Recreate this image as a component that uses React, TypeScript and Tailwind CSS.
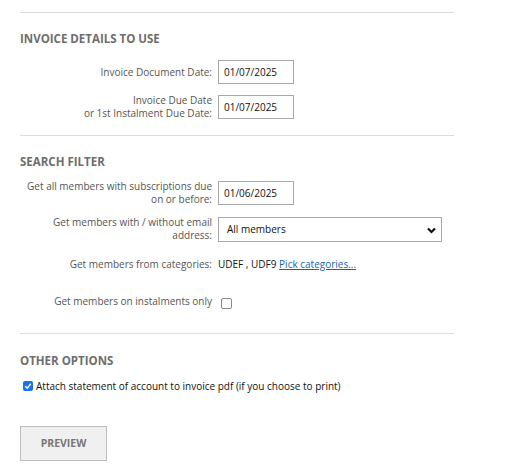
import { ReactNode } from 'react';

const Row = ({ label, children, className = '' }: { label: ReactNode; children: ReactNode; className?: string }) => (
  <div className={`flex items-center ${className}`}>
    <div className="w-[192px] shrink-0 text-right text-[10px] leading-[13px] text-[#555]">{label}</div>
    <div className="ml-[6px] flex items-center">{children}</div>
  </div>
);

const DateBox = ({ value }: { value: string }) => (
  <input
    readOnly
    defaultValue={value}
    className="h-[24px] w-[76px] border border-[#a9a9a9] bg-white pl-[5px] text-[10px] text-[#111] outline-none"
  />
);

const Heading = ({ children, className = 'mt-[18px]' }: { children: ReactNode; className?: string }) => (
  <div className={`text-[11.5px] font-bold leading-[16px] text-[#6e6e6e] ${className}`}>{children}</div>
);

const Rule = ({ className = '' }: { className?: string }) => (
  <div className={`h-px w-[434px] bg-[#dcdcdc] ${className}`} />
);

export default function App() {
  return (
    <div className="min-h-[476px] w-[508px] bg-white pl-[20px] pt-[12px]" style={{ fontFamily: '"Open Sans", sans-serif' }}>
      <Rule />

      <Heading>INVOICE DETAILS TO USE</Heading>
      <Row label="Invoice Document Date:" className="mt-[13px]">
        <DateBox value="01/07/2025" />
      </Row>
      <Row
        label={
          <>
            Invoice Due Date
            <br />
            or 1st Instalment Due Date:
          </>
        }
        className="mt-[10px]"
      >
        <DateBox value="01/07/2025" />
      </Row>

      <Rule className="mt-[15px]" />

      <Heading>SEARCH FILTER</Heading>
      <Row label="Get all members with subscriptions due on or before:" className="mt-[10px]">
        <DateBox value="01/06/2025" />
      </Row>
      <Row label="Get members with / without email address:" className="mt-[10px]">
        <div className="relative flex h-[25px] w-[224px] items-center border border-[#a9a9a9] bg-white pl-[8px] text-[10px] text-[#111]">
          All members
          <svg className="absolute right-[5px] top-[9px]" width="9" height="7" viewBox="0 0 9 7">
            <polyline points="1,1.5 4.5,5 8,1.5" fill="none" stroke="#111" strokeWidth="2.2" />
          </svg>
        </div>
      </Row>
      <Row label="Get members from categories:" className="mt-[10px] h-[24px]">
        <span className="text-[10px] text-[#111]">
          UDEF , UDF9{' '}
          <a href="#" className="text-[#1a5fb4] underline">
            Pick categories...
          </a>
        </span>
      </Row>
      <div className="mt-[19px] flex items-start">
        <div className="w-[192px] shrink-0 text-right text-[10px] leading-[13px] text-[#555]">Get members on instalments only</div>
        <span className="ml-[9px] mt-[3px] block h-[11px] w-[11px] rounded-[2px] border border-[#8a8a8a] bg-white" />
      </div>

      <Rule className="mt-[24px]" />

      <Heading className="mt-[19px]">OTHER OPTIONS</Heading>
      <div className="mt-[11px] flex items-start">
        <span className="ml-[3px] mt-[1px] flex h-[10px] w-[10px] items-center justify-center rounded-[2px] bg-[#1a73e8]">
          <svg width="8" height="8" viewBox="0 0 8 8">
            <polyline points="1.2,4.2 3.2,6.2 6.8,1.8" fill="none" stroke="#fff" strokeWidth="1.5" />
          </svg>
        </span>
        <span className="ml-[3px] text-[10px] leading-[13px] text-[#111]">
          Attach statement of account to invoice pdf (if you choose to print)
        </span>
      </div>

      <button className="mt-[33px] flex h-[35px] w-[87px] items-center justify-center border border-[#bdbdbd] bg-[#f0f0f0] text-[10.5px] font-bold text-[#777]">
        PREVIEW
      </button>
    </div>
  );
}
